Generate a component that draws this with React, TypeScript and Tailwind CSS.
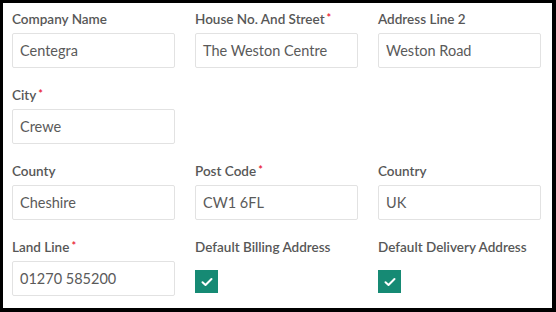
import React from "react";

const font = { fontFamily: "Lato, 'Open Sans', sans-serif" };

function Label({ text, req }: { text: string; req?: boolean }) {
  return (
    <div className="h-[20px] leading-[20px] text-[13.5px] font-semibold text-[#575757] whitespace-nowrap">
      {text}
      {req && <span className="text-[#e8102c] text-[11px] align-top relative top-[-1px] ml-[2px]">*</span>}
    </div>
  );
}

function Field({ label, value, req }: { label: string; value: string; req?: boolean }) {
  return (
    <div className="flex flex-col">
      <Label text={label} req={req} />
      <div className="mt-[4px] h-[35px] w-[163px] border border-[#e2e2e2] rounded-[2px] bg-white flex items-center pl-[7px] text-[14.5px] text-[#5a5a5a]">
        {value}
      </div>
    </div>
  );
}

function Check({ label }: { label: string }) {
  return (
    <div className="flex flex-col">
      <Label text={label} />
      <div className="mt-[13px] w-[23px] h-[23px] bg-[#168a74] flex items-center justify-center">
        <svg width="12" height="10" viewBox="0 0 12 10">
          <path d="M1.5 5.2 L4.5 8 L10.5 2" stroke="white" strokeWidth="2" fill="none" strokeLinecap="round" strokeLinejoin="round" />
        </svg>
      </div>
    </div>
  );
}

export default function App() {
  return (
    <div style={font} className="w-[556px] h-[312px] bg-white border-l-[3px] border-t-[3px] border-r-4 border-b-4 border-black pl-[9px] pt-[6px]">
      <div className="grid grid-cols-[163px_163px_163px] gap-x-[20px] gap-y-[17px]">
        <Field label="Company Name" value="Centegra" />
        <Field label="House No. And Street" value="The Weston Centre" req />
        <Field label="Address Line 2" value="Weston Road" />
        <Field label="City" value="Crewe" req />
        <div />
        <div />
        <Field label="County" value="Cheshire" />
        <Field label="Post Code" value="CW1 6FL" req />
        <Field label="Country" value="UK" />
        <Field label="Land Line" value="01270 585200" req />
        <Check label="Default Billing Address" />
        <Check label="Default Delivery Address" />
      </div>
    </div>
  );
}
